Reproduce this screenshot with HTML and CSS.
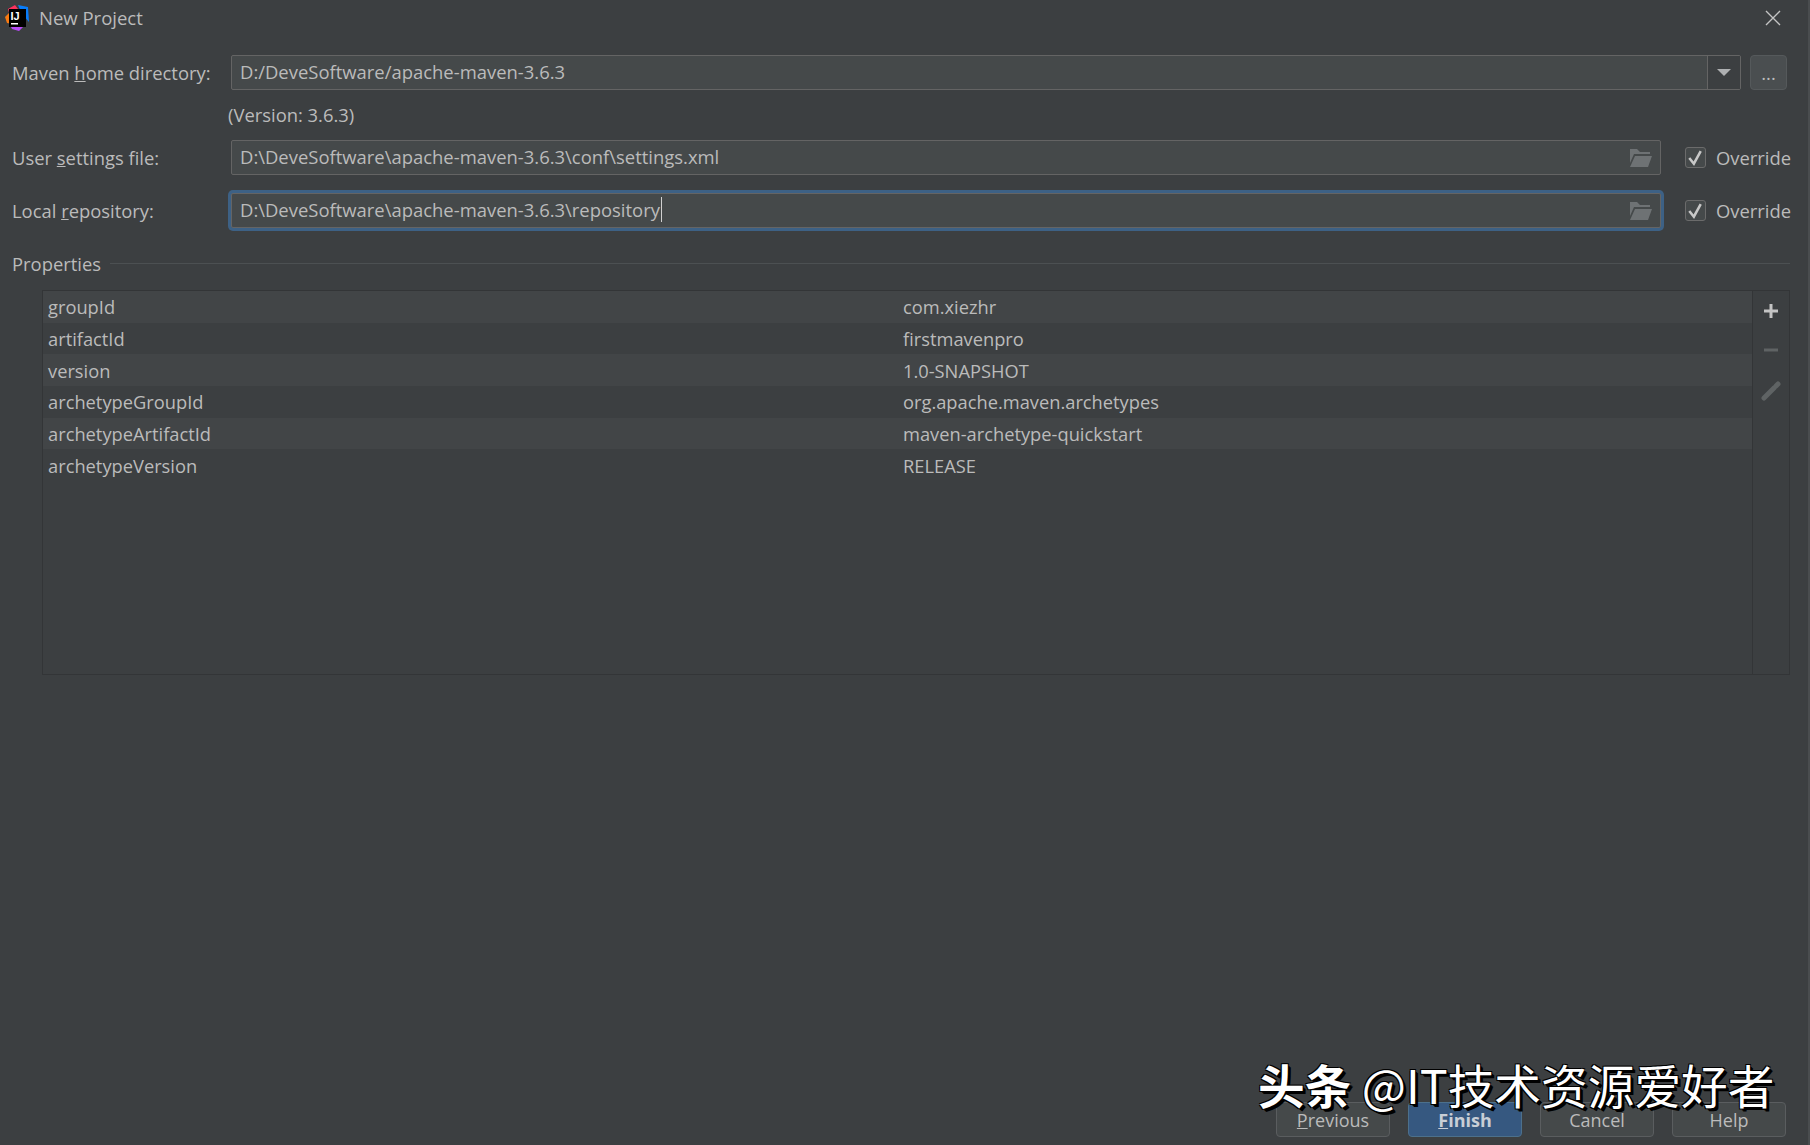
FILE: index.html
```html
<!DOCTYPE html>
<html lang="en">
<head>
  <meta charset="UTF-8">
  <meta name="viewport" content="width=device-width, initial-scale=1.0">
  <title>New Project</title>
  <link rel="stylesheet" href="styles.css">
</head>
<body>
  <div class="dialog">
    <!-- Title bar -->
    <div class="title-bar">
      <svg class="app-logo" width="26" height="28" viewBox="0 0 26 28">
        <path d="M4 5 L11 1 L14 5 L6 12 Z" fill="#fe315d"/>
        <path d="M14 1 L24 3 L25 18 L18 10 Z" fill="#087cfa"/>
        <path d="M1 13 L6 8 L8 20 L3 19 Z" fill="#f97a12"/>
        <path d="M5 19 L16 22 L22 20 L15 27 L8 25 Z" fill="#b74af7"/>
        <rect x="5" y="5" width="17" height="18" fill="#000000"/>
        <text x="6.5" y="15.5" class="logo-text">IJ</text>
        <rect x="7" y="19" width="7" height="1.5" fill="#ffffff"/>
      </svg>
      <div class="title-text">New Project</div>
      <svg class="close-icon" width="16" height="16" viewBox="0 0 16 16">
        <path d="M1 1 L15 15 M15 1 L1 15" stroke="#c4c4c4" stroke-width="1.4" fill="none"/>
      </svg>
    </div>

    <!-- Maven settings -->
    <div class="form-row first-row">
      <div class="form-label">Maven <u>h</u>ome directory:</div>
      <div class="field">
        <div class="field-text">D:/DeveSoftware/apache-maven-3.6.3</div>
        <div class="combo-arrow"><div class="arrow-down"></div></div>
      </div>
      <div class="browse-button">...</div>
    </div>

    <div class="version-text">(Version: 3.6.3)</div>

    <div class="form-row">
      <div class="form-label">User <u>s</u>ettings file:</div>
      <div class="field">
        <div class="field-text">D:\DeveSoftware\apache-maven-3.6.3\conf\settings.xml</div>
        <svg class="folder-icon" width="24" height="20" viewBox="0 0 24 20">
          <path d="M1 1 H8 L11 4 H21 V6 H5 L1 15 Z" fill="#6e7274"/>
          <path d="M6 8 H23 L19 19 H1 Z" fill="#6e7274"/>
        </svg>
      </div>
      <label class="override">
        <span class="checkbox"><svg width="16" height="16" viewBox="0 0 14 14"><path d="M2 7 L6 12 L12 1" stroke="#c8c8c8" stroke-width="2.2" fill="none"/></svg></span>
        Override
      </label>
    </div>

    <div class="form-row focused-row">
      <div class="form-label">Local <u>r</u>epository:</div>
      <div class="field focused">
        <div class="field-text"><span class="caret">D:\DeveSoftware\apache-maven-3.6.3\repository</span></div>
        <svg class="folder-icon" width="24" height="20" viewBox="0 0 24 20">
          <path d="M1 1 H8 L11 4 H21 V6 H5 L1 15 Z" fill="#6e7274"/>
          <path d="M6 8 H23 L19 19 H1 Z" fill="#6e7274"/>
        </svg>
      </div>
      <label class="override">
        <span class="checkbox"><svg width="16" height="16" viewBox="0 0 14 14"><path d="M2 7 L6 12 L12 1" stroke="#c8c8c8" stroke-width="2.2" fill="none"/></svg></span>
        Override
      </label>
    </div>

    <!-- Properties -->
    <div class="section-title">
      <span>Properties</span>
      <div class="section-line"></div>
    </div>

    <div class="props-table">
      <div class="props-list">
        <div class="prop-row"><div class="prop-key">groupId</div><div>com.xiezhr</div></div>
        <div class="prop-row"><div class="prop-key">artifactId</div><div>firstmavenpro</div></div>
        <div class="prop-row"><div class="prop-key">version</div><div>1.0-SNAPSHOT</div></div>
        <div class="prop-row"><div class="prop-key">archetypeGroupId</div><div>org.apache.maven.archetypes</div></div>
        <div class="prop-row"><div class="prop-key">archetypeArtifactId</div><div>maven-archetype-quickstart</div></div>
        <div class="prop-row"><div class="prop-key">archetypeVersion</div><div>RELEASE</div></div>
      </div>
      <div class="props-toolbar">
        <svg width="16" height="16" viewBox="0 0 16 16"><path d="M8 1 V15 M1 8 H15" stroke="#c4c4c4" stroke-width="3" fill="none"/></svg>
        <svg width="16" height="16" viewBox="0 0 16 16"><path d="M1 8 H15" stroke="#5f6364" stroke-width="3" fill="none"/></svg>
        <svg width="20" height="20" viewBox="0 0 20 20"><path d="M3 17 L13 7 M15 5 L17 3" stroke="#5f6364" stroke-width="5" stroke-linecap="round" fill="none"/></svg>
      </div>
    </div>

    <!-- Bottom buttons -->
    <div class="button-bar">
      <div class="button"><u>P</u>revious</div>
      <div class="button primary"><u>F</u>inish</div>
      <div class="button">Cancel</div>
      <div class="button">Help</div>
    </div>

    <div class="watermark"><b>头条</b> @IT技术资源爱好者</div>
  </div>
</body>
</html>
```

FILE: styles.css
```css
body, html {
  margin: 0;
  padding: 0;
  height: 100%;
  overflow: hidden;
  background-color: #3c3f41;
  font-family: "Open Sans", Arial, sans-serif;
  font-size: 18.4px;
  color: #bbbbbb;
}

.dialog {
  position: relative;
  display: flex;
  flex-direction: column;
  height: 100vh;
  box-sizing: border-box;
  border-right: 2px solid #4a4d4f;
}

/* Title bar */
.title-bar {
  display: flex;
  align-items: center;
  height: 36px;
  padding: 0 27px 0 4px;
  margin-bottom: 19px;
}

.app-logo {
  margin-right: 9px;
}

.logo-text {
  font-family: "Liberation Sans", Arial, sans-serif;
  font-size: 11px;
  font-weight: bold;
  fill: #ffffff;
}

.title-text {
  flex: 1;
  padding-bottom: 2px;
  font-size: 18.5px;
}

/* Form rows */
.form-row {
  display: flex;
  align-items: center;
  height: 35px;
  padding: 0 17px 0 12px;
  margin-bottom: 18px;
}

.first-row {
  padding-right: 21px;
  margin-bottom: 0;
}

.form-label {
  width: 219px;
  flex-shrink: 0;
}

.field {
  flex: 1;
  display: flex;
  align-items: center;
  height: 35px;
  box-sizing: border-box;
  background-color: #45494a;
  border: 1px solid #646464;
  border-radius: 2px;
}

.field.focused {
  box-shadow: 0 0 0 3px #3d6185;
}

.field-text {
  flex: 1;
  padding: 0 0 2px 8px;
  font-size: 18.45px;
  white-space: nowrap;
}

.caret {
  border-right: 1px solid #d0d0d0;
  padding-right: 1px;
}

.combo-arrow {
  display: flex;
  align-items: center;
  justify-content: center;
  width: 32px;
  height: 100%;
  background-color: #3c3f41;
  border-left: 1px solid #646464;
}

.arrow-down {
  width: 0;
  height: 0;
  border-left: 7px solid transparent;
  border-right: 7px solid transparent;
  border-top: 7px solid #aeb0b2;
}

.browse-button {
  display: flex;
  align-items: center;
  justify-content: center;
  width: 37px;
  height: 35px;
  box-sizing: border-box;
  margin-left: 9px;
  background-color: #4a4e50;
  border: 1px solid #55595b;
  border-radius: 4px;
}

.folder-icon {
  margin-right: 7px;
}

.override {
  display: flex;
  align-items: center;
  width: 130px;
  flex-shrink: 0;
  justify-content: flex-end;
}

.checkbox {
  display: flex;
  align-items: center;
  justify-content: center;
  width: 21px;
  height: 21px;
  box-sizing: border-box;
  margin-right: 10px;
  background-color: #45494a;
  border: 1px solid #6b6b6b;
  border-radius: 3px;
}

.version-text {
  padding-left: 228px;
  height: 50px;
  line-height: 50px;
}

.focused-row {
  margin-bottom: 0;
}

/* Properties */
.section-title {
  display: flex;
  align-items: center;
  height: 24px;
  margin-top: 23px;
  padding: 0 18px 0 12px;
}

.section-line {
  flex: 1;
  height: 1px;
  margin-left: 9px;
  background-color: #4c5052;
}

.props-table {
  display: flex;
  height: 385px;
  box-sizing: border-box;
  margin: 15px 18px 0 42px;
  border: 1px solid #333537;
}

.props-list {
  flex: 1;
}

.prop-row {
  display: flex;
  align-items: center;
  height: 31.65px;
  padding-left: 5px;
  font-size: 18.3px;
}

.prop-row:nth-child(odd) {
  background-color: #424547;
}

.prop-key {
  width: 855px;
}

.props-toolbar {
  display: flex;
  flex-direction: column;
  align-items: center;
  gap: 23px;
  width: 37px;
  padding-top: 12px;
  box-sizing: border-box;
  border-left: 1px solid #333537;
}

/* Bottom buttons */
.button-bar {
  display: flex;
  justify-content: flex-end;
  gap: 18px;
  margin-top: auto;
  padding: 0 22px 8px 0;
}

.button {
  display: flex;
  align-items: center;
  justify-content: center;
  width: 114px;
  height: 35px;
  box-sizing: border-box;
  background-color: #45494a;
  border: 1px solid #5a5d5f;
  border-radius: 4px;
  font-size: 18px;
}

.button.primary {
  background-color: #365880;
  border-color: #4c708c;
  color: #c8ced6;
  font-weight: bold;
}

/* Site watermark over the buttons */
.watermark {
  position: absolute;
  left: 1258px;
  top: 1054px;
  font-family: "Noto Sans CJK SC", sans-serif;
  font-size: 46.7px;
  line-height: 1.3;
  white-space: nowrap;
  color: #ffffff;
  text-shadow: 2px 2px 0 #000000, 3px 3px 0 #000000, -1px -1px 0 #000000, 1px -1px 0 #000000, -1px 1px 0 #000000;
}
```
